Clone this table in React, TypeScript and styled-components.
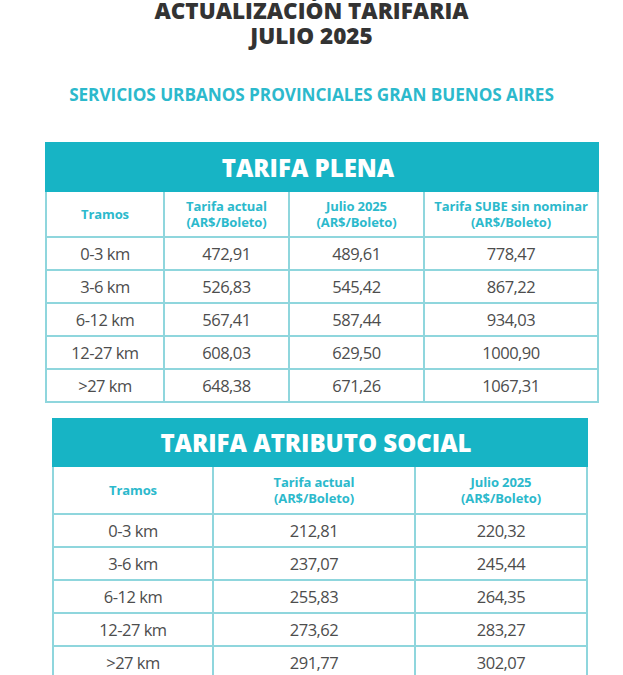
import React from "react";
import styled, { createGlobalStyle } from "styled-components";

const GlobalStyle = createGlobalStyle`
  html, body { margin: 0; padding: 0; background: #ffffff; }
  body { font-family: "Open Sans", "Noto Sans", "Liberation Sans", sans-serif; }
`;

const Page = styled.div`
  width: 623px;
  height: 675px;
  overflow: hidden;
  box-sizing: border-box;
`;

const Title = styled.h1`
  margin: -1px 0 0 0;
  text-align: center;
  font-size: 22.5px;
  line-height: 24.5px;
  font-weight: 800;
  color: #333333;
`;

const Subtitle = styled.h2`
  margin: 36px 0 0 0;
  text-align: center;
  font-size: 17.2px;
  line-height: 22px;
  font-weight: 700;
  color: #2cb9cc;
  letter-spacing: -0.05px;
`;

const Table = styled.table<{ $left: number; $width: number; $top: number }>`
  border-collapse: collapse;
  margin-left: ${(p) => p.$left}px;
  margin-top: ${(p) => p.$top}px;
  width: ${(p) => p.$width}px;
  table-layout: fixed;
  border: 2px solid #8fd6dd;
`;

const Band = styled.th<{ $h: number; $shift: number }>`
  height: ${(p) => p.$h}px;
  padding: 0 ${(p) => p.$shift}px 0 0;
  background: #17b4c5;
  color: #ffffff;
  font-size: 24px;
  font-weight: 800;
  text-align: center;
  border: 2px solid #17b4c5;
`;

const HeadCell = styled.th<{ $h: number }>`
  height: ${(p) => p.$h}px;
  padding: 0 1px;
  border: 2px solid #8fd6dd;
  color: #2cb9cc;
  font-size: 13px;
  line-height: 16px;
  font-weight: 700;
  text-align: center;
  vertical-align: middle;
  letter-spacing: -0.1px;
`;

const Cell = styled.td`
  height: 31px;
  padding: 0;
  border: 2px solid #8fd6dd;
  color: #4d4d4d;
  font-size: 16.5px;
  font-weight: 400;
  text-align: center;
  vertical-align: middle;
  letter-spacing: -0.5px;
`;

type TableData = {
  title: string;
  left: number;
  width: number;
  top: number;
  bandH: number;
  headH: number;
  shift: number;
  cols: number[];
  heads: string[][];
  rows: string[][];
};

const plena: TableData = {
  title: "TARIFA PLENA",
  left: 45,
  width: 552,
  top: 36,
  bandH: 46,
  headH: 44,
  shift: 28,
  cols: [118, 125, 135, 174],
  heads: [
    ["Tramos"],
    ["Tarifa actual", "(AR$/Boleto)"],
    ["Julio 2025", "(AR$/Boleto)"],
    ["Tarifa SUBE sin nominar", "(AR$/Boleto)"],
  ],
  rows: [
    ["0-3 km", "472,91", "489,61", "778,47"],
    ["3-6 km", "526,83", "545,42", "867,22"],
    ["6-12 km", "567,41", "587,44", "934,03"],
    ["12-27 km", "608,03", "629,50", "1000,90"],
    [">27 km", "648,38", "671,26", "1067,31"],
  ],
};

const social: TableData = {
  title: "TARIFA ATRIBUTO SOCIAL",
  left: 52,
  width: 534,
  top: 15,
  bandH: 45,
  headH: 46,
  shift: 8,
  cols: [160, 202, 172],
  heads: [["Tramos"], ["Tarifa actual", "(AR$/Boleto)"], ["Julio 2025", "(AR$/Boleto)"]],
  rows: [
    ["0-3 km", "212,81", "220,32"],
    ["3-6 km", "237,07", "245,44"],
    ["6-12 km", "255,83", "264,35"],
    ["12-27 km", "273,62", "283,27"],
    [">27 km", "291,77", "302,07"],
  ],
};

function FareTable({ data }: { data: TableData }) {
  return (
    <Table $left={data.left} $width={data.width} $top={data.top}>
      <colgroup>
        {data.cols.map((w, i) => (
          <col key={i} style={{ width: w }} />
        ))}
      </colgroup>
      <thead>
        <tr>
          <Band $h={data.bandH} $shift={data.shift} colSpan={data.cols.length}>
            {data.title}
          </Band>
        </tr>
        <tr>
          {data.heads.map((h, i) => (
            <HeadCell key={i} $h={data.headH}>
              {h.map((line, j) => (
                <React.Fragment key={j}>
                  {j > 0 && <br />}
                  {line}
                </React.Fragment>
              ))}
            </HeadCell>
          ))}
        </tr>
      </thead>
      <tbody>
        {data.rows.map((r, i) => (
          <tr key={i}>
            {r.map((c, j) => (
              <Cell key={j}>{c}</Cell>
            ))}
          </tr>
        ))}
      </tbody>
    </Table>
  );
}

export default function App() {
  return (
    <Page>
      <GlobalStyle />
      <Title>
        ACTUALIZACIÓN TARIFARIA
        <br />
        JULIO 2025
      </Title>
      <Subtitle>SERVICIOS URBANOS PROVINCIALES GRAN BUENOS AIRES</Subtitle>
      <FareTable data={plena} />
      <FareTable data={social} />
    </Page>
  );
}
